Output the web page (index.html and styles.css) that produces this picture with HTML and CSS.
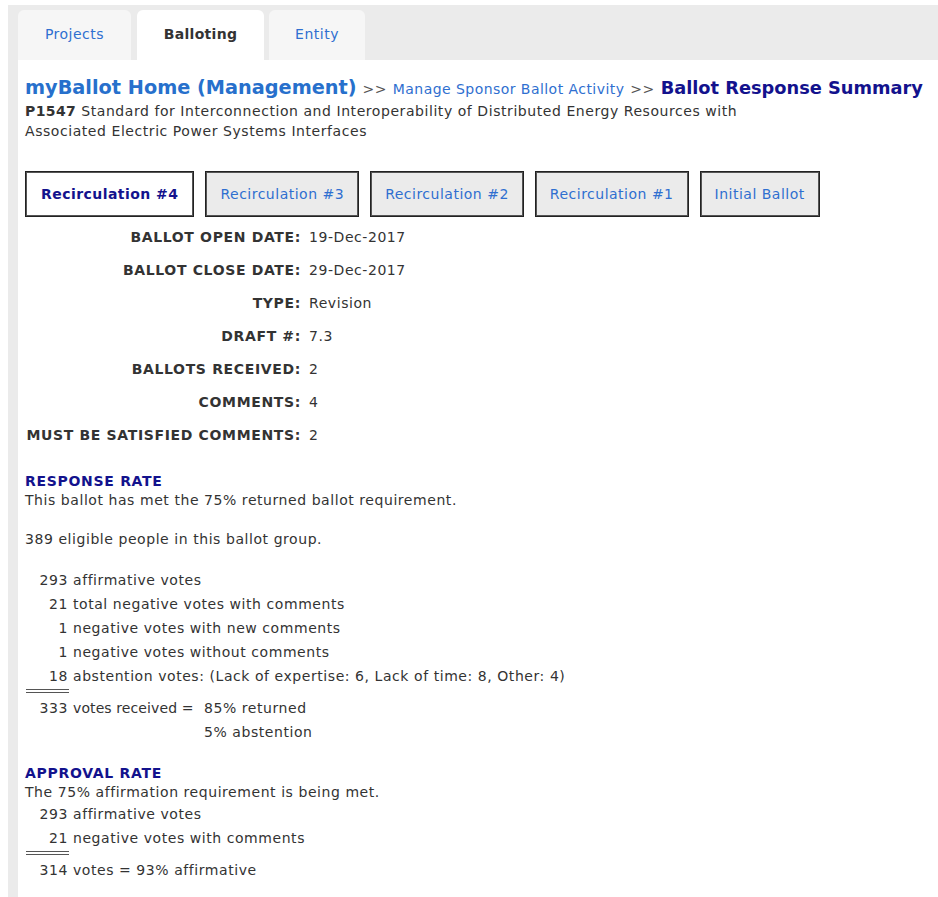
FILE: index.html
```html
<!DOCTYPE html>
<html lang="en">
<head>
<meta charset="utf-8">
<title>Ballot Response Summary</title>
<link rel="stylesheet" href="styles.css">
</head>
<body>
<div class="shell">
  <nav class="tabs">
    <a class="tab tab-projects">Projects</a>
    <a class="tab tab-active tab-balloting">Balloting</a>
    <a class="tab tab-entity">Entity</a>
  </nav>
  <main class="panel">
    <h1 class="crumbs">
      <a class="crumb-home">myBallot Home (Management)</a>
      <span class="crumb-sep">&gt;&gt;</span>
      <a class="crumb-link">Manage Sponsor Ballot Activity</a>
      <span class="crumb-sep">&gt;&gt;</span>
      <span class="crumb-current">Ballot Response Summary</span>
    </h1>
    <p class="project"><b>P1547</b> Standard for Interconnection and Interoperability of Distributed Energy Resources with<br>Associated Electric Power Systems Interfaces</p>

    <div class="rounds">
      <a class="round round-active">Recirculation #4</a>
      <a class="round">Recirculation #3</a>
      <a class="round">Recirculation #2</a>
      <a class="round">Recirculation #1</a>
      <a class="round">Initial Ballot</a>
    </div>

    <dl class="facts">
      <dt>BALLOT OPEN DATE:</dt><dd>19-Dec-2017</dd>
      <dt>BALLOT CLOSE DATE:</dt><dd>29-Dec-2017</dd>
      <dt>TYPE:</dt><dd>Revision</dd>
      <dt>DRAFT #:</dt><dd>7.3</dd>
      <dt>BALLOTS RECEIVED:</dt><dd>2</dd>
      <dt>COMMENTS:</dt><dd>4</dd>
      <dt>MUST BE SATISFIED COMMENTS:</dt><dd>2</dd>
    </dl>

    <section class="rate">
      <h2 class="rate-title">RESPONSE RATE</h2>
      <p class="rate-note">This ballot has met the 75% returned ballot requirement.</p>
      <p class="rate-note rate-gap">389 eligible people in this ballot group.</p>
      <div class="tally tally-response">
        <span class="num">293</span><span class="what">affirmative votes</span>
        <span class="num">21</span><span class="what">total negative votes with comments</span>
        <span class="num">1</span><span class="what">negative votes with new comments</span>
        <span class="num">1</span><span class="what">negative votes without comments</span>
        <span class="num">18</span><span class="what">abstention votes: (Lack of expertise: 6, Lack of time: 8, Other: 4)</span>
      </div>
      <div class="sum-rule"></div>
      <div class="total">
        <span class="num">333</span><span class="what">votes received =</span><span class="pct">85% returned</span>
        <span></span><span></span><span class="pct">5% abstention</span>
      </div>
    </section>

    <section class="rate rate-approval">
      <h2 class="rate-title">APPROVAL RATE</h2>
      <p class="rate-note">The 75% affirmation requirement is being met.</p>
      <div class="tally">
        <span class="num">293</span><span class="what">affirmative votes</span>
        <span class="num">21</span><span class="what">negative votes with comments</span>
      </div>
      <div class="sum-rule"></div>
      <div class="tally">
        <span class="num">314</span><span class="what">votes = 93% affirmative</span>
      </div>
    </section>
  </main>
</div>
</body>
</html>
```

FILE: styles.css
```css
html, body {
  margin: 0;
  padding: 0;
  background: #ffffff;
}

body {
  font-family: "DejaVu Sans", Verdana, sans-serif;
  color: #333333;
  font-size: 14px;
  letter-spacing: 0.56px;
}

.shell {
  margin: 5px 0 0 8px;
  padding: 5px 0 0 10px;
  background: #ebebeb;
  min-height: 892px;
  box-sizing: border-box;
}

/* top navigation tabs */
.tabs {
  display: flex;
  gap: 6px;
  height: 50px;
}

.tab {
  display: flex;
  align-items: center;
  justify-content: center;
  padding-bottom: 2px;
  box-sizing: border-box;
  background: #f6f6f6;
  border-radius: 6px 6px 0 0;
  color: #2f6fd0;
  font-size: 14px;
  letter-spacing: 0.5px;
}

.tab-projects { width: 113px; }
.tab-balloting { width: 127px; }
.tab-entity { width: 96px; margin-left: -1px; }

.tab-active {
  background: #ffffff;
  color: #333333;
  font-weight: bold;
  letter-spacing: 0.3px;
}

/* white work area */
.panel {
  background: #ffffff;
  padding: 15px 7px 20px;
  min-height: 820px;
}

.crumbs {
  margin: 0;
  font-size: 14px;
  font-weight: normal;
  line-height: 26px;
  white-space: nowrap;
  letter-spacing: 0.45px;
}

.crumb-home {
  color: #2770cc;
  font-size: 19.3px;
  font-weight: bold;
  letter-spacing: 0;
}

.crumb-sep {
  color: #555555;
  margin: 0 1px;
}

.crumb-link {
  color: #2f6fd0;
}

.crumb-current {
  color: #13128d;
  font-size: 17.8px;
  font-weight: bold;
  letter-spacing: 0;
}

.project {
  margin: -1px 0 0;
  line-height: 20px;
}

.project b {
  color: #333333;
  letter-spacing: 0.4px;
}

/* ballot round selector */
.rounds {
  display: flex;
  gap: 11px;
  margin-top: 30px;
}

.round {
  display: flex;
  align-items: center;
  justify-content: center;
  height: 44px;
  padding: 0 14px;
  border: 1px solid #222222;
  box-shadow: inset 0 0 0 1px #555555;
  background: #ebebeb;
  color: #2f6fd0;
  font-size: 14px;
  letter-spacing: 0.5px;
}

.round-active {
  background: #ffffff;
  color: #13128d;
  font-weight: bold;
  padding: 0 15px;
  letter-spacing: 0.45px;
}

/* ballot facts */
.facts {
  display: grid;
  grid-template-columns: 276px auto;
  column-gap: 8px;
  margin: 4px 0 0;
}

.facts dt {
  text-align: right;
  font-weight: bold;
  line-height: 33px;
  letter-spacing: 0.65px;
}

.facts dd {
  margin: 0;
  line-height: 33px;
}

/* response / approval rates */
.rate {
  margin-top: 20px;
}

.rate-title {
  margin: 0;
  color: #13128d;
  font-size: 14px;
  font-weight: bold;
  line-height: 19px;
  letter-spacing: 0.7px;
}

.rate-note {
  margin: 0;
  line-height: 19px;
}

.rate-gap {
  margin-top: 20px;
}

.tally,
.total {
  display: grid;
  grid-template-columns: 43px auto;
  column-gap: 5px;
  line-height: 24px;
}

.tally-response {
  margin-top: 19px;
}

/* percentages line up in their own column */
.total {
  grid-template-columns: 43px 126px auto;
}

.total .what {
  letter-spacing: 0.1px;
}

.num {
  text-align: right;
}

.sum-rule {
  width: 43px;
  margin: 1px 0 3px 1px;
  border-top: 4px double #555555;
}

.rate-approval {
  margin-top: 20px;
}
```
